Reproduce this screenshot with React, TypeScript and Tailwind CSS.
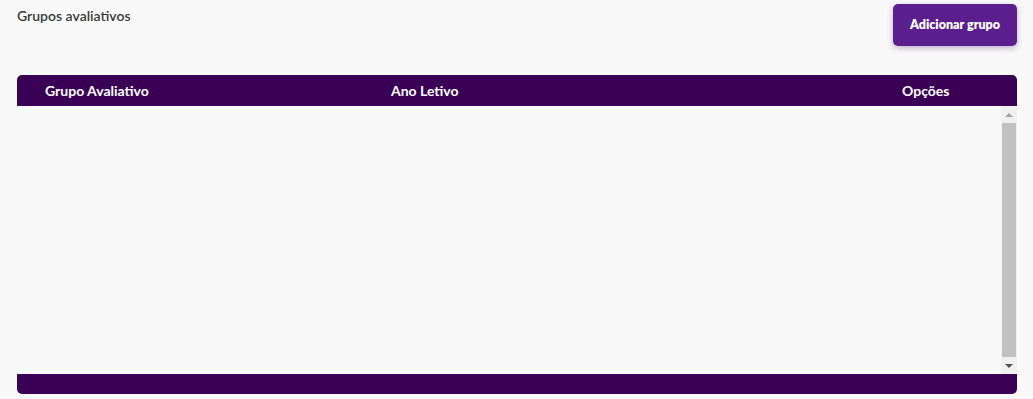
export default function App() {
  return (
    <div className="h-[399px] w-full bg-[#f9f9f9] font-['Lato',sans-serif] overflow-hidden">
      <div className="flex items-start justify-between pl-[17px] pr-[16px] pt-[4px]">
        <h1 className="pt-[3px] text-[14px] font-semibold leading-[18px] text-[#3a3a3a]">Grupos avaliativos</h1>
        <button className="h-[42px] w-[124px] rounded-[5px] bg-[#5b1f8d] text-[12.5px] font-extrabold text-white shadow-[0_2px_6px_rgba(60,0,90,0.3)]">
          Adicionar grupo
        </button>
      </div>

      <div className="mx-[17px] mt-[29px] w-[1000px]">
        <div className="flex h-[31px] items-start rounded-t-[5px] bg-[#3a0055] pt-[5px] text-[14px] font-bold text-white">
          <div className="w-[374px] pl-[28px]">Grupo Avaliativo</div>
          <div className="flex-1">Ano Letivo</div>
          <div className="w-[115px]">Opções</div>
        </div>

        <div className="flex h-[268px]">
          <div className="flex-1" />
          <div className="flex w-[16px] flex-col bg-[#f1f1f1]">
            <div className="flex h-[17px] items-center justify-center">
              <div className="h-0 w-0 border-x-[4px] border-b-[4px] border-x-transparent border-b-[#a3a3a3]" />
            </div>
            <div className="mx-[1px] flex-1 bg-[#c1c1c1]" />
            <div className="flex h-[17px] items-center justify-center">
              <div className="h-0 w-0 border-x-[4px] border-t-[4px] border-x-transparent border-t-[#505050]" />
            </div>
          </div>
        </div>

        <div className="h-[20px] rounded-b-[5px] bg-[#3a0055]" />
      </div>
    </div>
  );
}
